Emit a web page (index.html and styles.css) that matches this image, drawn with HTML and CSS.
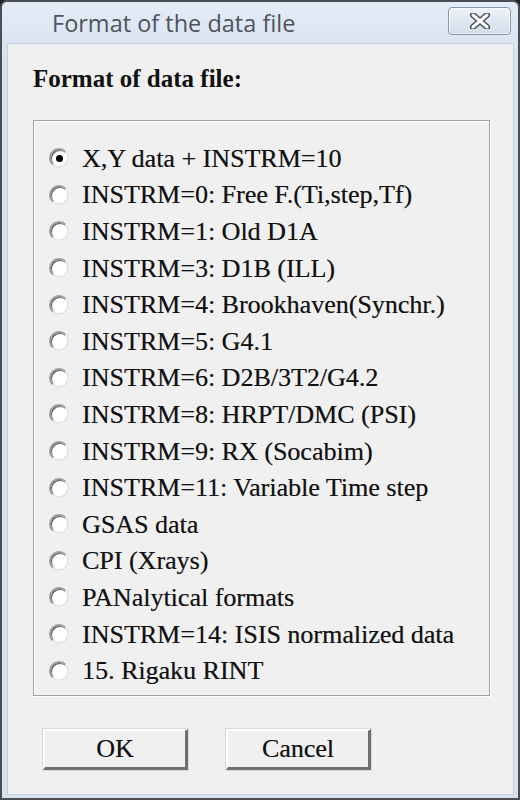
FILE: index.html
```html
<!DOCTYPE html>
<html>
<head>
<meta charset="utf-8">
<title>Format of the data file</title>
<link rel="stylesheet" href="styles.css">
</head>
<body>
<div class="window">
  <div class="titlebar">
    <span class="title">Format of the data file</span>
    <button class="close" aria-label="Close">
      <svg width="30" height="16" viewBox="0 0 30 16">
        <path d="M8 2 L22 14 M22 2 L8 14" stroke="#4a4f58" stroke-width="6" stroke-linecap="round"/>
        <path d="M8 2 L22 14 M22 2 L8 14" stroke="#ffffff" stroke-width="3" stroke-linecap="round"/>
      </svg>
    </button>
  </div>
  <div class="client">
    <div class="heading">Format of data file:</div>
    <div class="group">
      <label class="row"><span class="radio checked"></span><span>X,Y data + INSTRM=10</span></label>
      <label class="row"><span class="radio"></span><span>INSTRM=0: Free F.(Ti,step,Tf)</span></label>
      <label class="row"><span class="radio"></span><span>INSTRM=1: Old D1A</span></label>
      <label class="row"><span class="radio"></span><span>INSTRM=3: D1B (ILL)</span></label>
      <label class="row"><span class="radio"></span><span>INSTRM=4: Brookhaven(Synchr.)</span></label>
      <label class="row"><span class="radio"></span><span>INSTRM=5: G4.1</span></label>
      <label class="row"><span class="radio"></span><span>INSTRM=6: D2B/3T2/G4.2</span></label>
      <label class="row"><span class="radio"></span><span>INSTRM=8: HRPT/DMC (PSI)</span></label>
      <label class="row"><span class="radio"></span><span>INSTRM=9: RX (Socabim)</span></label>
      <label class="row"><span class="radio"></span><span>INSTRM=11: Variable Time step</span></label>
      <label class="row"><span class="radio"></span><span>GSAS data</span></label>
      <label class="row"><span class="radio"></span><span>CPI (Xrays)</span></label>
      <label class="row"><span class="radio"></span><span>PANalytical formats</span></label>
      <label class="row"><span class="radio"></span><span>INSTRM=14: ISIS normalized data</span></label>
      <label class="row"><span class="radio"></span><span>15. Rigaku RINT</span></label>
    </div>
    <div class="buttons">
      <button class="btn">OK</button>
      <button class="btn">Cancel</button>
    </div>
  </div>
</div>
</body>
</html>
```
FILE: styles.css
```css
html, body {
  margin: 0;
  padding: 0;
  background: #1e1e1e;
}
body {
  width: 520px;
  height: 800px;
  overflow: hidden;
}
.window {
  box-sizing: border-box;
  width: 520px;
  height: 800px;
  border: 2px solid #4b4f55;
  border-radius: 7px 7px 0 0;
  background: linear-gradient(#e3ecf7, #d6e2ef 60px, #d9e3ee);
  display: flex;
  flex-direction: column;
}
.titlebar {
  height: 41px;
  flex: none;
  display: flex;
  align-items: center;
  padding-left: 50px;
  padding-right: 7px;
}
.title {
  font-family: "Open Sans", "Noto Sans", sans-serif;
  font-size: 23.5px;
  color: #50535a;
  flex: 1;
  margin-top: 0;
}
.close {
  width: 63px;
  height: 28px;
  margin-top: -4px;
  border: 1px solid #8a98aa;
  border-radius: 4px;
  background: linear-gradient(#eef3f9, #dfe7f1 50%, #d3dde9);
  box-shadow: inset 0 0 0 1px rgba(255,255,255,0.6);
  display: flex;
  align-items: center;
  justify-content: center;
  padding: 0;
}
.client {
  flex: 1;
  margin: 0 4px 3px 5px;
  background: #f0f0f0;
  border: 1px solid #c4cfdc;
  padding: 0 0 0 25px;
  display: flex;
  flex-direction: column;
}
.heading {
  font-family: "Liberation Serif", "Times New Roman", serif;
  font-weight: bold;
  font-size: 25px;
  color: #111;
  margin-top: 20px;
  line-height: 30px;
}
.group {
  box-sizing: border-box;
  width: 457px;
  margin-top: 26px;
  border: 1px solid #a0a0a0;
  box-shadow: inset 1px 1px 0 #ffffff, 1px 1px 0 #ffffff;
  padding: 19px 0 6px 15px;
  display: flex;
  flex-direction: column;
}
.row {
  height: 36.6px;
  display: flex;
  align-items: center;
  gap: 13px;
  font-family: "Liberation Serif", "Times New Roman", serif;
  font-size: 26px;
  color: #111;
  white-space: nowrap;
  text-shadow: 0.4px 0 0 rgba(0, 0, 0, 0.45);
}
.row span:last-child {
  margin-top: 1px;
}
.radio {
  box-sizing: border-box;
  width: 20px;
  height: 20px;
  border-radius: 50%;
  border: 2px solid #9a9a9a;
  border-right-color: #e6e6e6;
  border-bottom-color: #e6e6e6;
  background: #ffffff;
  box-shadow: inset 1px 1px 0 #555;
  flex: none;
  display: flex;
  align-items: center;
  justify-content: center;
}
.radio.checked::after {
  content: "";
  width: 7px;
  height: 7px;
  border-radius: 50%;
  background: #000;
}
.buttons {
  display: flex;
  gap: 38px;
  margin-top: 33px;
  padding-left: 10px;
}
.btn {
  box-sizing: border-box;
  width: 145px;
  height: 41px;
  background: #f0f0f0;
  border: none;
  border-top: 2px solid #ffffff;
  border-left: 2px solid #ffffff;
  border-right: 3px solid #6f6f6f;
  border-bottom: 3px solid #6f6f6f;
  box-shadow: 0 0 0 1px #d8d8d8;
  font-family: "Liberation Serif", "Times New Roman", serif;
  font-size: 26px;
  color: #111;
  padding: 0;
  text-shadow: 0.4px 0 0 rgba(0, 0, 0, 0.45);
}
```
